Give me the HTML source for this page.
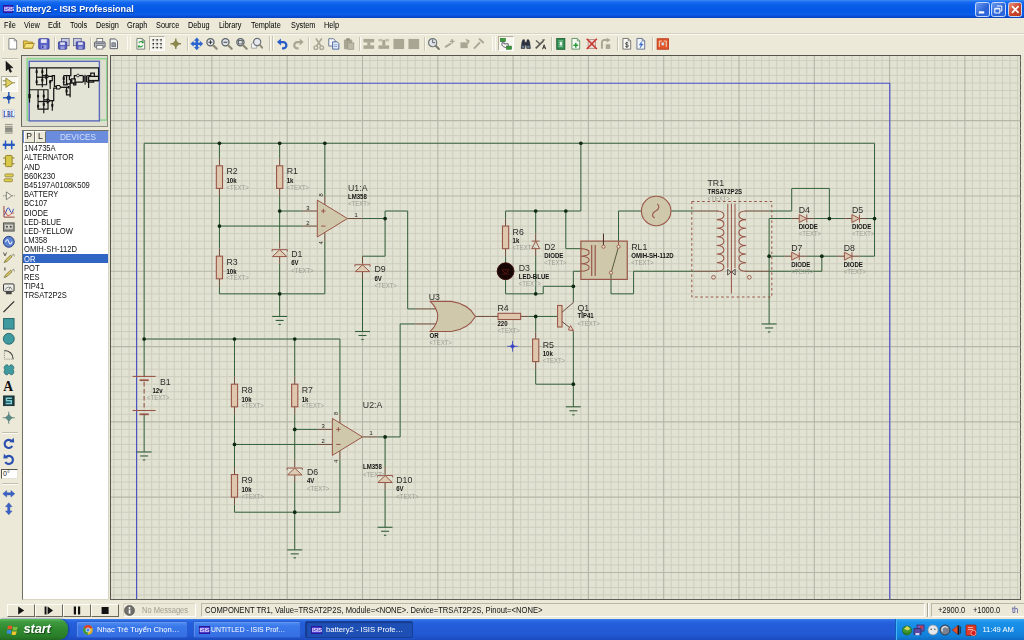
<!DOCTYPE html><html><head><meta charset="utf-8"><title>battery2 - ISIS Professional</title><style>
*{box-sizing:border-box;margin:0;padding:0}
html,body{width:1024px;height:640px;overflow:hidden;background:#ece9d8;font-family:"Liberation Sans",sans-serif;}
body{position:relative}
.abs{position:absolute}
#title{will-change:transform;left:0;top:0;width:1024px;height:18px;background:linear-gradient(#3f8cf4 0,#176af0 2px,#075ce8 6px,#0558e4 11px,#0a5eea 14.5px,#0848cc 17px,#0a40b8 18px);}
#title .t{left:16px;top:4.3px;color:#fff;font-weight:bold;font-size:9.1px;line-height:11px;transform-origin:0 50%;transform:scaleY(1.08);white-space:nowrap;text-shadow:0.6px 0.6px 0 #0a3a9a;letter-spacing:0px}
.wb{top:1.5px;width:14.6px;height:15px;border:1px solid #c4d8fa;border-radius:2.5px;background:linear-gradient(135deg,#6c9cf0,#2a62d6 60%,#2f6ae0);}
.wb.x{background:linear-gradient(135deg,#e8907a,#c8452a 55%,#b83a20);}
#menu{will-change:transform;left:0;top:18px;width:1024px;height:15px;background:#ece9d8;}
#menu span{position:absolute;top:2.4px;font-size:8.4px;line-height:10px;color:#000;white-space:nowrap;transform-origin:0 0;transform:scaleX(.875)}
#tb{left:0;top:33px;width:1024px;height:22px;background:#ece9d8;border-top:1px solid #d6d3c2;box-shadow:inset 0 1px 0 #f8f7f0}
.sep{position:absolute;top:36.5px;width:1px;height:14px;background:#c8c5b3;border-right:1px solid #fbfaf4;box-sizing:content-box}
#left{left:0;top:55px;width:20px;height:545px;background:#ece9d8}
#ov{left:21px;top:55.3px;width:86.6px;height:71.6px;background:#dfdfcf;border:1px solid #64645c;border-right-color:#8c8c82;border-bottom-color:#8c8c82}
#dev{will-change:transform;left:21.5px;top:130px;width:86.5px;height:469.5px;background:#fff;border:1px solid #6f6f64;border-right-color:#d8d5c4;border-bottom-color:#d8d5c4}
#devh{left:0;top:0;width:84.5px;height:11.5px;background:#6b8bdc}
.pl{position:absolute;top:0;height:11.5px;width:11px;background:#ece9d8;border:1px solid #fff;border-right-color:#6f6f64;border-bottom-color:#6f6f64;font-size:8.6px;line-height:9.5px;text-align:center;color:#222}
#devh .d{left:25px;top:0.5px;width:60px;text-align:center;color:#cfe0fb;font-size:8.6px;line-height:11px;transform:scaleX(.96)}
.li{position:absolute;left:0;width:84.5px;height:9.2px;font-size:8.9px;line-height:10.4px;color:#111;white-space:nowrap;padding-left:1.2px}
.li span{display:inline-block;transform-origin:0 50%;transform:scaleX(.855)}
.li.sel{background:#3165c3;color:#fff}
#canvas{left:110px;top:55px;width:911px;height:544.5px;background:#e2e2d2;border-left:1px solid #55554d;border-top:1px solid #55554d;border-right:1.3px solid #5e5e56;border-bottom:1.3px solid #5e5e56}
#status{will-change:transform;left:0;top:600px;width:1024px;height:19px;background:#ece9d8}
.pb{position:absolute;top:3.5px;height:13px;width:28px;border:1px solid #fdfdf8;border-right-color:#6b675a;border-bottom-color:#6b675a;background:#ece9d8}
.sunk{position:absolute;top:3px;height:14px;border:1px solid #bab7a6;border-right-color:#fff;border-bottom-color:#fff;background:#ece9d8}
#status .s{position:absolute;font-size:9.2px;line-height:10px;top:5.3px;white-space:nowrap;color:#111;transform-origin:0 0}
#task{will-change:transform;left:0;top:619px;width:1024px;height:21px;background:linear-gradient(#3a80f0 0,#2a67e2 2px,#245edb 5px,#2259d4 15px,#1c4bbf 21px)}
#start{left:0;top:0;width:68px;height:21px;background:linear-gradient(#5cb85c 0,#3f9a3f 3px,#2f8a2f 10px,#2a7f2a 17px,#226a22 21px);border-radius:0 9px 9px 0;box-shadow:1px 0 2px #1a3f8a}
#start .t{left:23.5px;top:2px;font-size:13px;line-height:15px;color:#fff;font-weight:bold;font-style:italic;text-shadow:1px 1px 1px #174a17;letter-spacing:-0.2px}
.tk{position:absolute;top:2px;height:17px;border-radius:2px;background:linear-gradient(#4f8df2,#3a78ea 30%,#356fe3);border:1px solid #2a5ccc;box-shadow:inset 0.5px 0.5px 0 #78a8f8;color:#fff;font-size:7.6px;line-height:15px;white-space:nowrap;overflow:hidden}
.tk.act{background:#1e4fb4;border-color:#173f94;box-shadow:inset 1px 1px 1px #143a8a}
.tk span{position:absolute;left:20px;top:0;transform-origin:0 50%;transform:scaleX(.94)}
.isis{position:absolute;left:6px;top:4px;width:11px;height:7.5px;background:#4a3cd2;border:0.5px solid #2a1a98;color:#ece4ff;font-size:5.8px;line-height:6.5px;text-align:center;font-weight:bold;letter-spacing:-0.3px}
#tray{left:895px;top:0;width:129px;height:21px;background:linear-gradient(#3aa8f4 0,#1b93ea 3px,#158ae4 10px,#1280da 17px,#0f6cc4 21px);border-left:1px solid #0d5fb8;box-shadow:inset 1px 0 0 #48b4f8}
#tray .tm{left:86.4px;top:4.6px;color:#fff;font-size:7.6px;line-height:11px;white-space:nowrap}
svg text{font-family:"Liberation Sans",sans-serif}
svg text.serif{font-family:"Liberation Serif",serif}
.ref{font-size:9.7px;fill:#2e2e2c}
.val{font-size:6.6px;fill:#141414;font-weight:bold}
.tx{font-size:6.4px;fill:#9b9b92}
.pn{font-size:5.8px;fill:#1c1c1c}
</style></head><body>
<div id="title" class="abs"><div class="isis" style="left:3px;top:5px;width:10px;height:7.5px">ISIS</div><div class="t abs">battery2 - ISIS Professional</div>
<div class="wb abs" style="left:975.2px"><svg width="12.6" height="13" style="position:absolute;left:0;top:0"><rect x="2.8" y="8.3" width="5.4" height="2.2" fill="#fff"/></svg></div>
<div class="wb abs" style="left:991.3px"><svg width="12.6" height="13" style="position:absolute;left:0;top:0"><path d="M4.8,3h5v5h-1.6M2.8,5.3h5v4.7h-5z M2.8,5.9h5" fill="none" stroke="#fff" stroke-width="1"/></svg></div>
<div class="wb x abs" style="left:1007.8px"><svg width="12.6" height="13" style="position:absolute;left:0;top:0"><path d="M3,3.2l6.6,6.6M9.6,3.2l-6.6,6.6" stroke="#fff" stroke-width="1.7"/></svg></div>
</div>
<div id="menu" class="abs">
<span style="left:4px">File</span>
<span style="left:24px">View</span>
<span style="left:48px">Edit</span>
<span style="left:69.5px">Tools</span>
<span style="left:96px">Design</span>
<span style="left:127px">Graph</span>
<span style="left:156px">Source</span>
<span style="left:188px">Debug</span>
<span style="left:219px">Library</span>
<span style="left:251px">Template</span>
<span style="left:291px">System</span>
<span style="left:324px">Help</span>
</div>
<div id="tb" class="abs"></div>
<div class="sep" style="left:53.5px"></div>
<div class="sep" style="left:89.5px"></div>
<div class="sep" style="left:186.5px"></div>
<div class="sep" style="left:308px"></div>
<div class="sep" style="left:358.5px"></div>
<div class="sep" style="left:424px"></div>
<div class="sep" style="left:551px"></div>
<div class="sep" style="left:616.5px"></div>
<div class="sep" style="left:652px"></div>
<div class="abs" style="left:2.5px;top:36px;width:1.6px;height:15px;background:#c6c3b0;border-right:1px solid #fbfaf4"></div>
<div class="abs" style="left:126.5px;top:36px;width:1.6px;height:15px;background:#c6c3b0;border-right:1px solid #fbfaf4"></div>
<div class="abs" style="left:129.5px;top:36px;width:1.6px;height:15px;background:#c6c3b0;border-right:1px solid #fbfaf4"></div>
<div class="abs" style="left:269px;top:36px;width:1.6px;height:15px;background:#c6c3b0;border-right:1px solid #fbfaf4"></div>
<div class="abs" style="left:272px;top:36px;width:1.6px;height:15px;background:#c6c3b0;border-right:1px solid #fbfaf4"></div>
<div class="abs" style="left:491.5px;top:36px;width:1.6px;height:15px;background:#c6c3b0;border-right:1px solid #fbfaf4"></div>
<div class="abs" style="left:494.5px;top:36px;width:1.6px;height:15px;background:#c6c3b0;border-right:1px solid #fbfaf4"></div>
<div class="abs" style="left:149.2px;top:35.6px;width:16px;height:15.6px;background:#f6f5ee;border:1px solid #b4b19e;border-right-color:#fff;border-bottom-color:#fff"></div>
<div class="abs" style="left:497.8px;top:35.6px;width:16px;height:15.6px;background:#f6f5ee;border:1px solid #b4b19e;border-right-color:#fff;border-bottom-color:#fff"></div>
<svg class="abs" style="left:5.5px;top:36.6px" width="13.6" height="13.6" viewBox="0 0 14 14"><path d="M3,1.5h5.5l2.5,2.5v8.5h-8z" fill="#fff" stroke="#7a7a78" stroke-width="0.9"/><path d="M8.5,1.5v2.5h2.5" fill="none" stroke="#7a7a78" stroke-width="0.8"/></svg>
<svg class="abs" style="left:21.5px;top:36.6px" width="13.6" height="13.6" viewBox="0 0 14 14"><path d="M1.5,4h4l1,1.2h4.5v6.3h-9.5z" fill="#e8c84a" stroke="#9a7a1a" stroke-width="0.8"/><path d="M1.5,11.5l2.2,-4.8h9l-2.2,4.8z" fill="#f6e27a" stroke="#9a7a1a" stroke-width="0.8"/></svg>
<svg class="abs" style="left:36.5px;top:36.6px" width="13.6" height="13.6" viewBox="0 0 14 14"><rect x="1.8" y="1.8" width="10.6" height="10.6" rx="0.8" fill="#5a62c8" stroke="#34389a" stroke-width="0.9"/><rect x="4" y="2.3" width="6" height="3.8" fill="#e8e8f4"/><rect x="4.2" y="8.2" width="5.6" height="4" fill="#9aa0e0"/><rect x="5" y="8.8" width="1.6" height="2.8" fill="#34389a"/></svg>
<svg class="abs" style="left:56.5px;top:36.6px" width="13.6" height="13.6" viewBox="0 0 14 14"><rect x="4.5" y="1.5" width="8" height="7.5" fill="#c8cce0" stroke="#5a5f8a" stroke-width="0.8"/><rect x="1.5" y="5" width="8.5" height="7.5" rx="0.6" fill="#5860c0" stroke="#30348a" stroke-width="0.8"/><rect x="3.3" y="5.5" width="4.8" height="2.6" fill="#e4e4f0"/><rect x="3.6" y="9.6" width="4.2" height="2.8" fill="#9aa0dc"/></svg>
<svg class="abs" style="left:72.0px;top:36.6px" width="13.6" height="13.6" viewBox="0 0 14 14"><rect x="1.5" y="1.5" width="8" height="7.5" fill="#c8cce0" stroke="#5a5f8a" stroke-width="0.8"/><rect x="4.5" y="5" width="8.5" height="7.5" rx="0.6" fill="#5860c0" stroke="#30348a" stroke-width="0.8"/><rect x="6.3" y="5.5" width="4.8" height="2.6" fill="#e4e4f0"/><rect x="6.6" y="9.6" width="4.2" height="2.8" fill="#9aa0dc"/></svg>
<svg class="abs" style="left:92.5px;top:36.6px" width="13.6" height="13.6" viewBox="0 0 14 14"><rect x="4" y="1.5" width="6" height="4" fill="#fff" stroke="#666" stroke-width="0.8"/><rect x="1.5" y="5" width="11" height="5.5" rx="1" fill="#b8bcc4" stroke="#55585f" stroke-width="0.9"/><rect x="3.8" y="8.6" width="6.4" height="3.8" fill="#fff" stroke="#666" stroke-width="0.8"/><rect x="2.5" y="6.2" width="9" height="1" fill="#7a7e88"/></svg>
<svg class="abs" style="left:107.0px;top:36.6px" width="13.6" height="13.6" viewBox="0 0 14 14"><path d="M3.2,2h5.4l2.2,2.2v7.8h-7.6z" fill="#f2f2f0" stroke="#5c616c" stroke-width="1"/><rect x="5" y="6" width="3.8" height="4" fill="#9a9ea8" stroke="#5c616c" stroke-width="0.7"/></svg>
<svg class="abs" style="left:133.5px;top:36.6px" width="13.6" height="13.6" viewBox="0 0 14 14"><path d="M3,1.5h5.5l2.5,2.5v8.5h-8z" fill="#f6f8f2" stroke="#6a7a6a" stroke-width="0.9"/><path d="M8.5,1.5v2.5h2.5" fill="none" stroke="#6a7a6a" stroke-width="0.8"/><path d="M5,6.2a2.4,2.4 0 0 1 4.2,-0.6M9.4,4.4v1.6h-1.6M9,8.6a2.4,2.4 0 0 1 -4.2,0.6M4.6,10.8v-1.6h1.6" fill="none" stroke="#2a9a3a" stroke-width="1.1"/></svg>
<svg class="abs" style="left:150.0px;top:36.6px" width="13.6" height="13.6" viewBox="0 0 14 14"><rect x="2.6" y="2.2" width="1.5" height="1.5" fill="#1a1a1a"/><rect x="2.6" y="6.2" width="1.5" height="1.5" fill="#1a1a1a"/><rect x="2.6" y="10.2" width="1.5" height="1.5" fill="#1a1a1a"/><rect x="6.6" y="2.2" width="1.5" height="1.5" fill="#1a1a1a"/><rect x="6.6" y="6.2" width="1.5" height="1.5" fill="#1a1a1a"/><rect x="6.6" y="10.2" width="1.5" height="1.5" fill="#1a1a1a"/><rect x="10.6" y="2.2" width="1.5" height="1.5" fill="#1a1a1a"/><rect x="10.6" y="6.2" width="1.5" height="1.5" fill="#1a1a1a"/><rect x="10.6" y="10.2" width="1.5" height="1.5" fill="#1a1a1a"/><rect x="4.9" y="2.5" width="0.8" height="0.8" fill="#7a7a7a"/><rect x="4.9" y="6.5" width="0.8" height="0.8" fill="#7a7a7a"/><rect x="4.9" y="10.5" width="0.8" height="0.8" fill="#7a7a7a"/><rect x="8.9" y="2.5" width="0.8" height="0.8" fill="#7a7a7a"/><rect x="8.9" y="6.5" width="0.8" height="0.8" fill="#7a7a7a"/><rect x="8.9" y="10.5" width="0.8" height="0.8" fill="#7a7a7a"/><rect x="2.9" y="4.5" width="0.8" height="0.8" fill="#7a7a7a"/><rect x="2.9" y="8.5" width="0.8" height="0.8" fill="#7a7a7a"/><rect x="6.9" y="4.5" width="0.8" height="0.8" fill="#7a7a7a"/><rect x="6.9" y="8.5" width="0.8" height="0.8" fill="#7a7a7a"/><rect x="10.9" y="4.5" width="0.8" height="0.8" fill="#7a7a7a"/><rect x="10.9" y="8.5" width="0.8" height="0.8" fill="#7a7a7a"/></svg>
<svg class="abs" style="left:169.0px;top:36.6px" width="13.6" height="13.6" viewBox="0 0 14 14"><path d="M7,1.6v10.8M1.6,7h10.8" stroke="#8c8850" stroke-width="1.5"/><path d="M7,3.4l3.6,3.6l-3.6,3.6l-3.6,-3.6z" fill="#8e8a4e" stroke="#76703a" stroke-width="0.5"/></svg>
<svg class="abs" style="left:189.5px;top:36.6px" width="13.6" height="13.6" viewBox="0 0 14 14"><path d="M5.7,3h2.6v2.7h2.7v2.6h-2.7v2.7h-2.6v-2.7h-2.7v-2.6h2.7z" fill="#2a66d2"/><path d="M7,0.7l2.5,2.8h-5zM7,13.3l2.5,-2.8h-5zM0.7,7l2.8,-2.5v5zM13.3,7l-2.8,-2.5v5z" fill="#2a66d2" stroke="#2458be" stroke-width="0.4"/></svg>
<svg class="abs" style="left:204.5px;top:36.6px" width="13.6" height="13.6" viewBox="0 0 14 14"><circle cx="5.6" cy="5.4" r="3.7" fill="#dfe5ea" stroke="#596068" stroke-width="1.3"/><path d="M8.4,8.4l3.6,3.8" stroke="#8c8a72" stroke-width="2.2" stroke-linecap="round"/><path d="M3.6,5.4h4M5.6,3.4v4" stroke="#333" stroke-width="1"/></svg>
<svg class="abs" style="left:219.5px;top:36.6px" width="13.6" height="13.6" viewBox="0 0 14 14"><circle cx="5.6" cy="5.4" r="3.7" fill="#dfe5ea" stroke="#596068" stroke-width="1.3"/><path d="M8.4,8.4l3.6,3.8" stroke="#8c8a72" stroke-width="2.2" stroke-linecap="round"/><path d="M3.6,5.4h4" stroke="#333" stroke-width="1"/></svg>
<svg class="abs" style="left:234.5px;top:36.6px" width="13.6" height="13.6" viewBox="0 0 14 14"><circle cx="5.6" cy="5.4" r="3.7" fill="#dfe5ea" stroke="#596068" stroke-width="1.3"/><path d="M8.4,8.4l3.6,3.8" stroke="#8c8a72" stroke-width="2.2" stroke-linecap="round"/><rect x="3.7" y="3.6" width="3.8" height="3.6" fill="none" stroke="#555" stroke-width="0.9"/></svg>
<svg class="abs" style="left:249.5px;top:36.6px" width="13.6" height="13.6" viewBox="0 0 14 14"><path d="M1.5,7l2.5,-2h3v6.5h-5.5z" fill="#f4f4f4" stroke="#888" stroke-width="0.7"/><circle cx="7.4" cy="5.2" r="3.7" fill="#e6eaee" stroke="#6a7078" stroke-width="1.2"/><path d="M10,8l2.6,3" stroke="#8c8a72" stroke-width="2" stroke-linecap="round"/></svg>
<svg class="abs" style="left:275.5px;top:36.6px" width="13.6" height="13.6" viewBox="0 0 14 14"><path d="M3.2,5.2h4.2a3.3,3.3 0 0 1 0,6.6h-1.2" fill="none" stroke="#2a5cc8" stroke-width="2.3"/><path d="M1,5.2l4,-3.6v7.2z" fill="#2a5cc8"/></svg>
<svg class="abs" style="left:291.0px;top:36.6px" width="13.6" height="13.6" viewBox="0 0 14 14"><path d="M10.8,5.2h-4.2a3.3,3.3 0 0 0 0,6.6h1.2" fill="none" stroke="#a9a693" stroke-width="2.3"/><path d="M13,5.2l-4,-3.6v7.2z" fill="#a9a693"/></svg>
<svg class="abs" style="left:311.5px;top:36.6px" width="13.6" height="13.6" viewBox="0 0 14 14"><path d="M4,1.5l5.4,8M10,1.5l-5.4,8" stroke="#a9a693" stroke-width="1.6"/><circle cx="4" cy="11" r="1.9" fill="none" stroke="#a9a693" stroke-width="1.4"/><circle cx="10" cy="11" r="1.9" fill="none" stroke="#a9a693" stroke-width="1.4"/></svg>
<svg class="abs" style="left:326.5px;top:36.6px" width="13.6" height="13.6" viewBox="0 0 14 14"><path d="M1.8,1.8h5l1.5,1.5v6h-6.5z" fill="#f4f6fa" stroke="#5a6a8a" stroke-width="0.9"/><path d="M5.8,5h4.7l1.7,1.7v5.8h-6.4z" fill="#e8eef8" stroke="#3a5a9a" stroke-width="0.9"/><path d="M7,8h3.8M7,9.8h3.8" stroke="#6a8ac8" stroke-width="0.7"/></svg>
<svg class="abs" style="left:341.5px;top:36.6px" width="13.6" height="13.6" viewBox="0 0 14 14"><rect x="2" y="2.5" width="8.5" height="10" rx="0.8" fill="#a9a693"/><rect x="4.5" y="1.3" width="3.5" height="2.4" fill="#8f8c7a"/><rect x="6" y="6" width="6.2" height="6.6" fill="#bdbaa8" stroke="#8f8c7a" stroke-width="0.6"/></svg>
<svg class="abs" style="left:362.0px;top:36.6px" width="13.6" height="13.6" viewBox="0 0 14 14"><rect x="1.5" y="2" width="11" height="3.6" fill="#a9a693"/><rect x="1.5" y="8.6" width="11" height="3.6" fill="#a9a693"/><rect x="5.4" y="5.4" width="3.2" height="3.4" fill="#a9a693"/></svg>
<svg class="abs" style="left:377.0px;top:36.6px" width="13.6" height="13.6" viewBox="0 0 14 14"><rect x="1.5" y="8.6" width="11" height="3.6" fill="#a9a693"/><rect x="5.4" y="3" width="3.2" height="5.8" fill="#a9a693"/><rect x="1.5" y="2" width="4" height="2.6" fill="#c2bfad"/><rect x="8.5" y="2" width="4" height="2.6" fill="#c2bfad"/></svg>
<svg class="abs" style="left:392.0px;top:36.6px" width="13.6" height="13.6" viewBox="0 0 14 14"><rect x="1.5" y="2" width="11" height="10.4" fill="#a9a693"/></svg>
<svg class="abs" style="left:406.5px;top:36.6px" width="13.6" height="13.6" viewBox="0 0 14 14"><rect x="1.5" y="2" width="11" height="10.4" fill="#a9a693"/></svg>
<svg class="abs" style="left:427.0px;top:36.6px" width="13.6" height="13.6" viewBox="0 0 14 14"><circle cx="5.8" cy="5.8" r="4.2" fill="#dfe4e6" stroke="#6f7678" stroke-width="1.2"/><path d="M5.8,2.6v3.2h2.6" stroke="#556" stroke-width="0.9" fill="none"/><path d="M9,9l3.2,3.4" stroke="#7a7a70" stroke-width="2" stroke-linecap="round"/></svg>
<svg class="abs" style="left:442.5px;top:36.6px" width="13.6" height="13.6" viewBox="0 0 14 14"><path d="M1.5,9.5l6,-3.5l1.2,1.5l-6,3.8z" fill="#a9a693"/><path d="M9.5,2v5M7,4.5h5" stroke="#a9a693" stroke-width="1.5"/></svg>
<svg class="abs" style="left:457.5px;top:36.6px" width="13.6" height="13.6" viewBox="0 0 14 14"><path d="M2.5,5.5h7.5v6h-7.5z" fill="#a9a693"/><path d="M8,2.5l3.5,1.2l-1,3.2" fill="#a9a693" stroke="#a9a693" stroke-width="1"/></svg>
<svg class="abs" style="left:472.0px;top:36.6px" width="13.6" height="13.6" viewBox="0 0 14 14"><path d="M2,12l6.2,-6.4" stroke="#a9a693" stroke-width="2"/><path d="M6.6,2.4l4.8,4.6l1.3,-1.5l-4.7,-4.5z" fill="#a9a693"/></svg>
<svg class="abs" style="left:498.5px;top:36.6px" width="13.6" height="13.6" viewBox="0 0 14 14"><rect x="1.5" y="1.5" width="5" height="3.2" fill="#3a9a3a" stroke="#1a6a1a" stroke-width="0.6"/><rect x="7.8" y="9.4" width="5" height="3.2" fill="#3a9a3a" stroke="#1a6a1a" stroke-width="0.6"/><path d="M5,4.7v2.3h4.5v2.4M4,4.7c-3,4 1,6 3.8,6.3" fill="none" stroke="#5a5a70" stroke-width="1"/></svg>
<svg class="abs" style="left:519.0px;top:36.6px" width="13.6" height="13.6" viewBox="0 0 14 14"><path d="M2.2,11.8l0.8,-6.5l1,-2.5h1.6l0.4,2.6h2l0.4,-2.6h1.6l1,2.5l0.8,6.5h-3.8l-0.4,-3.6h-1.2l-0.4,3.6z" fill="#2e3440" stroke="#1a1e28" stroke-width="0.5"/><rect x="3" y="9" width="2.6" height="2.2" fill="#6a7a90"/><rect x="8.4" y="9" width="2.6" height="2.2" fill="#6a7a90"/></svg>
<svg class="abs" style="left:534.0px;top:36.6px" width="13.6" height="13.6" viewBox="0 0 14 14"><path d="M1.8,11.6l7.6,-7.4" stroke="#5a5a52" stroke-width="1.8"/><path d="M8.4,2.2l3.2,0.4l-2.2,2.6z" fill="#5a5a52"/><path d="M2,3.5l4,3.4" stroke="#5a5a52" stroke-width="1.3"/><path d="M8.8,12.6l1.6,-4.6l1.7,4.6M9.4,11.1h2.2" stroke="#222" stroke-width="0.9" fill="none"/></svg>
<svg class="abs" style="left:554.0px;top:36.6px" width="13.6" height="13.6" viewBox="0 0 14 14"><rect x="2.8" y="1.5" width="8.4" height="11.2" fill="#2e8a4e" stroke="#1a5a30" stroke-width="0.8"/><path d="M4.5,4h5M4.5,6h5M4.5,8h5M4.5,10h5" stroke="#a8e0b8" stroke-width="0.8"/><rect x="6" y="5" width="2.2" height="3.8" fill="#e8f4ea"/></svg>
<svg class="abs" style="left:569.0px;top:36.6px" width="13.6" height="13.6" viewBox="0 0 14 14"><path d="M3,1.5h5.5l2.5,2.5v8.5h-8z" fill="#f4faf4" stroke="#5a8a5a" stroke-width="0.9"/><path d="M8.5,1.5v2.5h2.5" fill="none" stroke="#5a8a5a" stroke-width="0.8"/><path d="M7,6v5M4.5,8.5h5" stroke="#2a9a3a" stroke-width="1.5"/></svg>
<svg class="abs" style="left:584.5px;top:36.6px" width="13.6" height="13.6" viewBox="0 0 14 14"><rect x="3.2" y="2.5" width="7.6" height="9.4" fill="#e8d8d4" stroke="#a8786e" stroke-width="0.7"/><path d="M1.8,1.8l10.4,10.6M12.2,1.8l-10.4,10.6" stroke="#c8382e" stroke-width="1.7"/></svg>
<svg class="abs" style="left:599.0px;top:36.6px" width="13.6" height="13.6" viewBox="0 0 14 14"><path d="M3,12v-6.5a2.5,2.5 0 0 1 2.5,-2.5h3" fill="none" stroke="#a9a693" stroke-width="2"/><path d="M8,0.8l4,2.4l-4,2.4z" fill="#a9a693"/><rect x="7" y="7.5" width="4.6" height="4.8" fill="#a9a693"/></svg>
<svg class="abs" style="left:619.5px;top:36.6px" width="13.6" height="13.6" viewBox="0 0 14 14"><path d="M3,1.5h5.5l2.5,2.5v8.5h-8z" fill="#fbfbf6" stroke="#6a6a66" stroke-width="0.9"/><path d="M8.5,1.5v2.5h2.5" fill="none" stroke="#6a6a66" stroke-width="0.8"/><path d="M8.6,6.4c-0.4,-0.9 -3,-1 -3,0.4c0,1.6 3.2,0.8 3.2,2.4c0,1.4 -2.8,1.4 -3.4,0.2M7,4.8v6.6" fill="none" stroke="#444" stroke-width="0.9"/></svg>
<svg class="abs" style="left:634.0px;top:36.6px" width="13.6" height="13.6" viewBox="0 0 14 14"><path d="M3,1.5h5.5l2.5,2.5v8.5h-8z" fill="#f2f6fc" stroke="#5a6a86" stroke-width="0.9"/><path d="M8.5,1.5v2.5h2.5" fill="none" stroke="#5a6a86" stroke-width="0.8"/><path d="M8,4.6l-2.6,3.6h2l-1.2,3.2l3.2,-4.2h-2.1z" fill="#3a78d8" stroke="#2a58a8" stroke-width="0.4"/></svg>
<svg class="abs" style="left:655.5px;top:36.6px" width="13.6" height="13.6" viewBox="0 0 14 14"><rect x="1.2" y="1.8" width="11.6" height="10.8" fill="#e2562a" stroke="#b8381a" stroke-width="0.9"/><path d="M3.4,4.2v6M3.4,4.2h2.6M10.6,4.2v6M8,4.2h2.6M5.6,7.2h3" stroke="#f8d8c4" stroke-width="1"/><rect x="5.8" y="5.6" width="2.4" height="3" fill="#c8e0f0"/></svg>
<div id="left" class="abs"></div><div class="abs" style="left:1px;top:75.5px;width:16.5px;height:16px;background:#f7f6ef;border:1px solid #b4b19e;border-right-color:#fff;border-bottom-color:#fff"></div>
<svg class="abs" style="left:1.6px;top:60.0px" width="13.6" height="13.6" viewBox="0 0 14 14"><path d="M4,1.2l0.2,10l2.3,-2.2l1.8,3.8l1.7,-0.8l-1.8,-3.7l3.2,-0.3z" fill="#1c1c1c" stroke="#000" stroke-width="0.4"/></svg>
<svg class="abs" style="left:1.6px;top:76.4px" width="13.6" height="13.6" viewBox="0 0 14 14"><path d="M4,2.2l7,4.8l-7,4.8z" fill="#e0d060" stroke="#8a8030" stroke-width="0.9"/><path d="M0.8,5h3.2M0.8,9h3.2M11,7h2.6" stroke="#8a8030" stroke-width="1"/></svg>
<svg class="abs" style="left:1.6px;top:91.3px" width="13.6" height="13.6" viewBox="0 0 14 14"><path d="M7,1v12M1,7h12" stroke="#2a5fc0" stroke-width="1.5"/><circle cx="7" cy="7" r="2.4" fill="#1f4aa0"/></svg>
<svg class="abs" style="left:1.6px;top:106.6px" width="13.6" height="13.6" viewBox="0 0 14 14"><rect x="0.8" y="3" width="12.4" height="8" fill="#f4f6fc" stroke="#7088b8" stroke-width="0.6" stroke-dasharray="1,0.8"/><text x="1.3" y="10" font-size="7.4" font-weight="bold" fill="#1f3f9a" class="serif" textLength="11.4" lengthAdjust="spacingAndGlyphs">LBL</text></svg>
<svg class="abs" style="left:1.6px;top:122.2px" width="13.6" height="13.6" viewBox="0 0 14 14"><path d="M3,2.5h8M3,4.5h8M3,11.5h8" stroke="#8a8a80" stroke-width="0.9"/><rect x="3.2" y="6.2" width="7.6" height="3.4" fill="#8e8e86"/><path d="M3,6h8M3,10h8" stroke="#55554e" stroke-width="0.6"/></svg>
<svg class="abs" style="left:1.6px;top:138.0px" width="13.6" height="13.6" viewBox="0 0 14 14"><path d="M0.8,7h12.4" stroke="#2458c0" stroke-width="2.4"/><path d="M3.6,2.5v9M10,2.5v9" stroke="#2458c0" stroke-width="1.5"/></svg>
<svg class="abs" style="left:1.6px;top:154.0px" width="13.6" height="13.6" viewBox="0 0 14 14"><rect x="3.6" y="1.5" width="6.8" height="11.5" rx="1" fill="#d8c84a" stroke="#8a7a20" stroke-width="0.9"/><path d="M1.2,4.2h2.4M1.2,10h2.4M10.4,4.2h2.4M10.4,10h2.4" stroke="#8a7a20" stroke-width="1.1"/></svg>
<svg class="abs" style="left:1.6px;top:171.4px" width="13.6" height="13.6" viewBox="0 0 14 14"><rect x="3" y="3" width="8.6" height="3" rx="1" fill="#e0d050" stroke="#8a8030" stroke-width="0.8"/><rect x="2.2" y="8" width="8.6" height="3" rx="1" fill="#e0d050" stroke="#8a8030" stroke-width="0.8"/></svg>
<svg class="abs" style="left:1.6px;top:188.6px" width="13.6" height="13.6" viewBox="0 0 14 14"><path d="M4.5,3l5.6,4l-5.6,4z" fill="#f4f2e4" stroke="#77776c" stroke-width="0.9"/><path d="M1,7h3.5M10.1,7h3" stroke="#77776c" stroke-width="0.9" stroke-dasharray="1.2,0.8"/></svg>
<svg class="abs" style="left:1.6px;top:204.5px" width="13.6" height="13.6" viewBox="0 0 14 14"><path d="M2,1v11.5h11" fill="none" stroke="#8a2a2a" stroke-width="0.9"/><path d="M2,10c2,0 2.6,-7 4.4,-7s2,5 3.4,5s1.4,-4 2.6,-4" fill="none" stroke="#2a4ac0" stroke-width="1"/><path d="M2,6c2,0 2.4,5 4.4,5s2.6,-3 6,-3" fill="none" stroke="#c83a3a" stroke-width="0.9"/></svg>
<svg class="abs" style="left:1.6px;top:219.5px" width="13.6" height="13.6" viewBox="0 0 14 14"><rect x="1.5" y="3" width="11" height="8.4" fill="#9a9a94" stroke="#4a4a46" stroke-width="0.9"/><rect x="3" y="5" width="8" height="4" fill="#d8d8d0"/><circle cx="5" cy="7" r="1.1" fill="#444"/><circle cx="9" cy="7" r="1.1" fill="#444"/></svg>
<svg class="abs" style="left:1.6px;top:235.0px" width="13.6" height="13.6" viewBox="0 0 14 14"><circle cx="7" cy="7" r="5.6" fill="#5a80d0" stroke="#2a3f80" stroke-width="1"/><path d="M3.6,7.4c0.9,-3.4 2.5,-3.4 3.4,-0.4s2.5,3 3.4,-0.4" fill="none" stroke="#eef" stroke-width="1.1"/></svg>
<svg class="abs" style="left:1.6px;top:250.5px" width="13.6" height="13.6" viewBox="0 0 14 14"><path d="M2.2,12l1.6,-3l5,-4.6l1.5,1.6l-5,4.6z" fill="#d8c860" stroke="#6a6030" stroke-width="0.7"/><path d="M10,5c1.5,-2.5 2.5,-2 2.6,0.6" fill="none" stroke="#6a6a5a" stroke-width="0.8"/><path d="M1.5,1.5l1.6,3.5l1.6,-3.5" fill="none" stroke="#444" stroke-width="0.9"/></svg>
<svg class="abs" style="left:1.6px;top:266.0px" width="13.6" height="13.6" viewBox="0 0 14 14"><path d="M2.2,12l1.6,-3l5,-4.6l1.5,1.6l-5,4.6z" fill="#d8c860" stroke="#6a6030" stroke-width="0.7"/><path d="M10,5c1.5,-2.5 2.5,-2 2.6,0.6" fill="none" stroke="#6a6a5a" stroke-width="0.8"/><path d="M3,1.5v3.2" stroke="#444" stroke-width="1.1"/></svg>
<svg class="abs" style="left:1.6px;top:282.4px" width="13.6" height="13.6" viewBox="0 0 14 14"><rect x="1.6" y="2" width="10.8" height="7.6" rx="1" fill="#eeeeea" stroke="#333" stroke-width="1"/><path d="M3.5,8a3.6,3.6 0 0 1 7,0M7,8l1.8,-3" fill="none" stroke="#555" stroke-width="0.7"/><rect x="4" y="9.6" width="6" height="3" fill="#444"/></svg>
<svg class="abs" style="left:1.6px;top:300.0px" width="13.6" height="13.6" viewBox="0 0 14 14"><path d="M1.5,12.5l11,-11" stroke="#222" stroke-width="1.2"/></svg>
<svg class="abs" style="left:1.6px;top:316.7px" width="13.6" height="13.6" viewBox="0 0 14 14"><rect x="1.6" y="1.6" width="10.8" height="10.8" fill="#3f9aa0" stroke="#27686e" stroke-width="1"/></svg>
<svg class="abs" style="left:1.6px;top:331.7px" width="13.6" height="13.6" viewBox="0 0 14 14"><circle cx="7" cy="7" r="5.6" fill="#3f9aa0" stroke="#27686e" stroke-width="1"/></svg>
<svg class="abs" style="left:1.6px;top:348.4px" width="13.6" height="13.6" viewBox="0 0 14 14"><path d="M2.5,2.5a9,9 0 0 1 9,9" fill="none" stroke="#333" stroke-width="1.1"/><path d="M2.5,2.5v9h9" fill="none" stroke="#777" stroke-width="0.8" stroke-dasharray="1.2,1"/></svg>
<svg class="abs" style="left:1.6px;top:363.0px" width="13.6" height="13.6" viewBox="0 0 14 14"><path d="M4.4,2c2,-0.6 2,1.6 2.8,1.6s1,-2.2 2.8,-1.6c2.6,0.8 2.6,4 1.2,5c1.4,1 1.4,4.4 -1.2,5c-1.8,0.5 -2,-1.6 -2.8,-1.6s-0.8,2.2 -2.8,1.6c-2.6,-0.8 -2.6,-4 -1.2,-5c-1.4,-1 -1.4,-4.2 1.2,-5z" fill="#3f9aa0" stroke="#27686e" stroke-width="0.9"/></svg>
<svg class="abs" style="left:1.6px;top:379.2px" width="13.6" height="13.6" viewBox="0 0 14 14"><text x="1.2" y="12.3" font-size="14" font-weight="bold" fill="#111" class="serif">A</text></svg>
<svg class="abs" style="left:1.6px;top:394.4px" width="13.6" height="13.6" viewBox="0 0 14 14"><rect x="1.5" y="2" width="11" height="10" fill="#1f3f44" stroke="#10262a" stroke-width="0.8"/><path d="M10.2,4.4h-5.6v2.6h5v2.8h-5.8" fill="none" stroke="#7ad0d8" stroke-width="1.5"/></svg>
<svg class="abs" style="left:1.6px;top:410.5px" width="13.6" height="13.6" viewBox="0 0 14 14"><path d="M7,0.8v12.4M0.8,7h12.4" stroke="#6a8a84" stroke-width="1.1"/><path d="M7,3.6l3.4,3.4l-3.4,3.4l-3.4,-3.4z" fill="#5a8a88" stroke="#3a6a66" stroke-width="0.6"/></svg>
<svg class="abs" style="left:1.6px;top:437.0px" width="13.6" height="13.6" viewBox="0 0 14 14"><path d="M10.6,9.2a4.2,4.2 0 1 1 -0.6,-5" fill="none" stroke="#2a4fb0" stroke-width="2.2"/><path d="M7.6,5.4l5,0.2l-0.6,-4.8z" fill="#2a4fb0"/></svg>
<svg class="abs" style="left:1.6px;top:452.6px" width="13.6" height="13.6" viewBox="0 0 14 14"><path d="M3.4,9.2a4.2,4.2 0 1 0 0.6,-5" fill="none" stroke="#2a4fb0" stroke-width="2.2"/><path d="M6.4,5.4l-5,0.2l0.6,-4.8z" fill="#2a4fb0"/></svg>
<svg class="abs" style="left:1.6px;top:486.6px" width="13.6" height="13.6" viewBox="0 0 14 14"><path d="M0.8,7l4,-3.4v2.2h4.4v-2.2l4,3.4l-4,3.4v-2.2h-4.4v2.2z" fill="#3a62c8" stroke="#2a48a0" stroke-width="0.4"/></svg>
<svg class="abs" style="left:1.6px;top:502.4px" width="13.6" height="13.6" viewBox="0 0 14 14"><path d="M7,0.8l3.4,4h-2.2v4.4h2.2l-3.4,4l-3.4,-4h2.2v-4.4h-2.2z" fill="#3a62c8" stroke="#2a48a0" stroke-width="0.4"/></svg>
<div class="abs" style="left:1.5px;top:58.3px;width:16px;height:1px;background:#c2bfad;border-bottom:1px solid #fbfaf4;box-sizing:content-box"></div>
<div class="abs" style="left:1.5px;top:432.4px;width:16px;height:1px;background:#c2bfad;border-bottom:1px solid #fbfaf4;box-sizing:content-box"></div>
<div class="abs" style="left:1.5px;top:483.4px;width:16px;height:1px;background:#c2bfad;border-bottom:1px solid #fbfaf4;box-sizing:content-box"></div>
<div class="abs" style="left:1px;top:468.6px;width:16.5px;height:10.8px;background:#fff;border:1px solid #55554e;border-right-color:#e4e2d4;border-bottom-color:#e4e2d4;font-size:7px;line-height:8.5px;color:#222;padding-left:1px">0°</div>
<div id="ov" class="abs"><svg class="abs" style="left:0;top:0" width="84.6" height="69.6" viewBox="22 56.3 84.6 69.6">
<rect x="27.2" y="59" width="79.6" height="61.4" fill="none" stroke="#8fd693" stroke-width="1.6"/>
<rect x="29.2" y="61.6" width="70.2" height="59.6" fill="#e3e3d6" stroke="#5b69bc" stroke-width="1.4"/>
<polyline points="29.51,102.68 29.51,68.29 98.61,68.29 98.61,80.87 88.64,80.87" fill="none" stroke="#141414" stroke-width="1.25"/>
<polyline points="36.64,68.29 36.64,85.07 46.61,85.07 46.61,68.29" fill="none" stroke="#141414" stroke-width="1.15"/>
<polyline points="42.33,68.29 42.33,87.58" fill="none" stroke="#141414" stroke-width="1.15"/>
<polyline points="36.64,77.52 45.90,77.52" fill="none" stroke="#141414" stroke-width="1.25"/>
<polyline points="42.33,75.84 45.90,75.84" fill="none" stroke="#141414" stroke-width="1.25"/>
<polyline points="45.90,74.58 48.75,76.68 45.90,78.77 45.90,74.58" fill="none" stroke="#141414" stroke-width="1.15"/>
<polyline points="48.75,76.68 52.31,76.68 52.31,75.84 54.44,75.84 54.44,86.74 56.58,86.74" fill="none" stroke="#141414" stroke-width="1.25"/>
<polyline points="52.31,76.68 52.31,80.87 50.17,80.87 50.17,89.26" fill="none" stroke="#141414" stroke-width="1.15"/>
<polyline points="29.51,90.10 48.03,90.10 48.03,109.39 38.06,109.39 38.06,90.10" fill="none" stroke="#141414" stroke-width="1.15"/>
<polyline points="43.76,90.10 43.76,113.59" fill="none" stroke="#141414" stroke-width="1.15"/>
<polyline points="38.06,101.84 47.32,101.84" fill="none" stroke="#141414" stroke-width="1.25"/>
<polyline points="43.76,100.16 47.32,100.16" fill="none" stroke="#141414" stroke-width="1.25"/>
<polyline points="47.32,98.91 50.17,101.00 47.32,103.10 47.32,98.91" fill="none" stroke="#141414" stroke-width="1.15"/>
<polyline points="50.17,101.00 53.73,101.00 53.73,88.42 56.58,88.42" fill="none" stroke="#141414" stroke-width="1.25"/>
<polyline points="52.31,101.00 52.31,111.07" fill="none" stroke="#141414" stroke-width="1.15"/>
<polyline points="56.58,85.90 59.43,85.90 60.86,87.58 59.43,89.26 56.58,89.26 56.58,85.90" fill="none" stroke="#141414" stroke-width="1.05"/>
<polyline points="60.86,87.58 68.69,87.58" fill="none" stroke="#141414" stroke-width="1.3499999999999999"/>
<polyline points="66.55,87.58 66.55,95.13 70.12,95.13" fill="none" stroke="#141414" stroke-width="1.25"/>
<polyline points="70.12,82.55 70.12,97.65" fill="none" stroke="#141414" stroke-width="1.25"/>
<polyline points="68.69,86.32 68.69,88.84" fill="none" stroke="#141414" stroke-width="1.75"/>
<polyline points="63.70,75.84 63.70,85.07 67.27,85.07 67.27,84.23 70.12,84.23" fill="none" stroke="#141414" stroke-width="1.25"/>
<polyline points="66.55,75.84 66.55,85.07" fill="none" stroke="#141414" stroke-width="1.25"/>
<polyline points="63.70,75.84 70.83,75.84 70.83,68.29" fill="none" stroke="#141414" stroke-width="1.25"/>
<polyline points="69.40,75.84 69.40,80.03 70.83,80.03" fill="none" stroke="#141414" stroke-width="1.25"/>
<polyline points="70.83,79.19 75.10,79.19 75.10,83.39 70.83,83.39 70.83,79.19" fill="none" stroke="#141414" stroke-width="1.45"/>
<polyline points="71.54,80.03 71.54,82.55" fill="none" stroke="#141414" stroke-width="1.75"/>
<polyline points="74.39,79.19 74.39,75.84 76.53,75.84" fill="none" stroke="#141414" stroke-width="1.25"/>
<polyline points="73.68,83.39 73.68,85.07 75.81,85.07 75.81,82.55 82.94,82.55" fill="none" stroke="#141414" stroke-width="1.25"/>
<polyline points="79.38,75.84 82.94,75.84" fill="none" stroke="#141414" stroke-width="1.25"/>
<circle cx="77.95" cy="75.84" r="1.4" fill="none" stroke="#1a1a1a" stroke-width="0.8"/>
<circle cx="63.70" cy="82.55" r="1" fill="#1a1a1a"/>
<polyline points="83.65,75.84 83.65,82.55" fill="none" stroke="#141414" stroke-width="1.95"/>
<polyline points="86.50,75.84 86.50,82.55" fill="none" stroke="#141414" stroke-width="1.95"/>
<polyline points="85.07,75.00 85.07,85.07" fill="none" stroke="#141414" stroke-width="0.9500000000000001"/>
<polyline points="87.21,75.84 90.77,75.84 90.77,73.32 94.34,73.32 94.34,76.68" fill="none" stroke="#141414" stroke-width="1.25"/>
<polyline points="88.64,76.68 98.61,76.68" fill="none" stroke="#141414" stroke-width="1.3499999999999999"/>
<polyline points="88.64,76.68 88.64,88.42" fill="none" stroke="#141414" stroke-width="1.25"/>
<polyline points="87.21,82.55 93.62,82.55 93.62,80.87" fill="none" stroke="#141414" stroke-width="1.25"/>
<polyline points="88.64,80.87 98.61,80.87" fill="none" stroke="#141414" stroke-width="1.3499999999999999"/>
<polyline points="36.64,70.72 36.64,73.41" fill="none" stroke="#141414" stroke-width="2.05"/>
<polyline points="42.33,70.72 42.33,73.41" fill="none" stroke="#141414" stroke-width="2.05"/>
<polyline points="36.64,80.79 36.64,83.47" fill="none" stroke="#141414" stroke-width="2.05"/>
<polyline points="38.06,95.05 38.06,97.73" fill="none" stroke="#141414" stroke-width="2.05"/>
<polyline points="43.76,95.05 43.76,97.73" fill="none" stroke="#141414" stroke-width="2.05"/>
<polyline points="38.06,105.11 38.06,107.80" fill="none" stroke="#141414" stroke-width="2.05"/>
<polyline points="63.70,77.43 63.70,80.12" fill="none" stroke="#141414" stroke-width="2.05"/>
<polyline points="66.55,90.01 66.55,92.70" fill="none" stroke="#141414" stroke-width="2.05"/>
<polyline points="42.33,79.11 42.33,81.79" fill="none" stroke="#141414" stroke-width="2.05"/>
<polyline points="50.17,80.79 50.17,83.47" fill="none" stroke="#141414" stroke-width="2.05"/>
<polyline points="43.76,103.44 43.76,106.12" fill="none" stroke="#141414" stroke-width="2.05"/>
<polyline points="52.31,104.28 52.31,106.96" fill="none" stroke="#141414" stroke-width="2.05"/>
<polyline points="29.51,94.29 29.51,98.49" fill="none" stroke="#141414" stroke-width="2.35"/>
</svg></div>
<div id="dev" class="abs"><div id="devh" class="abs"><div class="pl" style="left:0.5px">P</div><div class="pl" style="left:12px">L</div><div class="d abs">DEVICES</div></div>
<div class="li" style="top:12.2px"><span>1N4735A</span></div>
<div class="li" style="top:21.4px"><span>ALTERNATOR</span></div>
<div class="li" style="top:30.6px"><span>AND</span></div>
<div class="li" style="top:39.8px"><span>B60K230</span></div>
<div class="li" style="top:49.0px"><span>B45197A0108K509</span></div>
<div class="li" style="top:58.2px"><span>BATTERY</span></div>
<div class="li" style="top:67.4px"><span>BC107</span></div>
<div class="li" style="top:76.6px"><span>DIODE</span></div>
<div class="li" style="top:85.8px"><span>LED-BLUE</span></div>
<div class="li" style="top:95.0px"><span>LED-YELLOW</span></div>
<div class="li" style="top:104.2px"><span>LM358</span></div>
<div class="li" style="top:113.4px"><span>OMIH-SH-112D</span></div>
<div class="li sel" style="top:122.6px"><span>OR</span></div>
<div class="li" style="top:131.8px"><span>POT</span></div>
<div class="li" style="top:141.0px"><span>RES</span></div>
<div class="li" style="top:150.2px"><span>TIP41</span></div>
<div class="li" style="top:159.4px"><span>TRSAT2P2S</span></div>
</div>
<div id="canvas" class="abs"></div>
<svg class="abs" style="left:0;top:0;will-change:transform" width="1024" height="640" viewBox="0 0 1024 640"><defs><clipPath id="cv"><rect x="111" y="56" width="909.5" height="543"/></clipPath></defs><g clip-path="url(#cv)">
<path d="M114.01,56V599M121.54,56V599M129.07,56V599M144.13,56V599M151.66,56V599M159.19,56V599M166.72,56V599M174.25,56V599M181.78,56V599M189.31,56V599M196.84,56V599M204.37,56V599M219.43,56V599M226.96,56V599M234.49,56V599M242.02,56V599M249.55,56V599M257.08,56V599M264.61,56V599M272.14,56V599M279.67,56V599M294.73,56V599M302.26,56V599M309.79,56V599M317.32,56V599M324.85,56V599M332.38,56V599M339.91,56V599M347.44,56V599M354.97,56V599M370.03,56V599M377.56,56V599M385.09,56V599M392.62,56V599M400.15,56V599M407.68,56V599M415.21,56V599M422.74,56V599M430.27,56V599M445.33,56V599M452.86,56V599M460.39,56V599M467.92,56V599M475.45,56V599M482.98,56V599M490.51,56V599M498.04,56V599M505.57,56V599M520.63,56V599M528.16,56V599M535.69,56V599M543.22,56V599M550.75,56V599M558.28,56V599M565.81,56V599M573.34,56V599M580.87,56V599M595.93,56V599M603.46,56V599M610.99,56V599M618.52,56V599M626.05,56V599M633.58,56V599M641.11,56V599M648.64,56V599M656.17,56V599M671.23,56V599M678.76,56V599M686.29,56V599M693.82,56V599M701.35,56V599M708.88,56V599M716.41,56V599M723.94,56V599M731.47,56V599M746.53,56V599M754.06,56V599M761.59,56V599M769.12,56V599M776.65,56V599M784.18,56V599M791.71,56V599M799.24,56V599M806.77,56V599M821.83,56V599M829.36,56V599M836.89,56V599M844.42,56V599M851.95,56V599M859.48,56V599M867.01,56V599M874.54,56V599M882.07,56V599M897.13,56V599M904.66,56V599M912.19,56V599M919.72,56V599M927.25,56V599M934.78,56V599M942.31,56V599M949.84,56V599M957.37,56V599M972.43,56V599M979.96,56V599M987.49,56V599M995.02,56V599M1002.55,56V599M1010.08,56V599M1017.61,56V599M111,60.41H1021M111,67.94H1021M111,75.47H1021M111,83.00H1021M111,90.53H1021M111,98.06H1021M111,105.59H1021M111,113.12H1021M111,128.18H1021M111,135.71H1021M111,143.24H1021M111,150.77H1021M111,158.30H1021M111,165.83H1021M111,173.36H1021M111,180.89H1021M111,188.42H1021M111,203.48H1021M111,211.01H1021M111,218.54H1021M111,226.07H1021M111,233.60H1021M111,241.13H1021M111,248.66H1021M111,256.19H1021M111,263.72H1021M111,278.78H1021M111,286.31H1021M111,293.84H1021M111,301.37H1021M111,308.90H1021M111,316.43H1021M111,323.96H1021M111,331.49H1021M111,339.02H1021M111,354.08H1021M111,361.61H1021M111,369.14H1021M111,376.67H1021M111,384.20H1021M111,391.73H1021M111,399.26H1021M111,406.79H1021M111,414.32H1021M111,429.38H1021M111,436.91H1021M111,444.44H1021M111,451.97H1021M111,459.50H1021M111,467.03H1021M111,474.56H1021M111,482.09H1021M111,489.62H1021M111,504.68H1021M111,512.21H1021M111,519.74H1021M111,527.27H1021M111,534.80H1021M111,542.33H1021M111,549.86H1021M111,557.39H1021M111,564.92H1021M111,579.98H1021M111,587.51H1021M111,595.04H1021" stroke="#cecebf" stroke-width="1" fill="none"/>
<path d="M136.60,56V599M211.90,56V599M287.20,56V599M362.50,56V599M437.80,56V599M513.10,56V599M588.40,56V599M663.70,56V599M739.00,56V599M814.30,56V599M889.60,56V599M964.90,56V599M111,120.65H1021M111,195.95H1021M111,271.25H1021M111,346.55H1021M111,421.85H1021M111,497.15H1021M111,572.45H1021" stroke="#b6b6a8" stroke-width="1.15" fill="none"/>
<path d="M136.6,600V83.2H889.8V600" fill="none" stroke="#4b50c6" stroke-width="1.15"/>
<polyline points="144.13,376.67 144.13,143.24 874.54,143.24 874.54,256.19 859.48,256.19" fill="none" stroke="#33603a" stroke-width="1.0"/>
<polyline points="219.43,143.24 219.43,158.3" fill="none" stroke="#33603a" stroke-width="1.0"/>
<polyline points="219.43,195.95 219.43,248.66" fill="none" stroke="#33603a" stroke-width="1.0"/>
<polyline points="219.43,286.31 219.43,293.84 324.85,293.84 324.85,241.13" fill="none" stroke="#33603a" stroke-width="1.0"/>
<polyline points="219.43,226.07 302.26,226.07" fill="none" stroke="#33603a" stroke-width="1.0"/>
<polyline points="279.67,143.24 279.67,158.3" fill="none" stroke="#33603a" stroke-width="1.0"/>
<polyline points="279.67,195.95 279.67,241.13" fill="none" stroke="#33603a" stroke-width="1.0"/>
<polyline points="279.67,263.72 279.67,316.43" fill="none" stroke="#33603a" stroke-width="1.0"/>
<polyline points="279.67,211.01 302.26,211.01" fill="none" stroke="#33603a" stroke-width="1.0"/>
<polyline points="324.85,143.24 324.85,195.95" fill="none" stroke="#33603a" stroke-width="1.0"/>
<polyline points="362.5,218.54 385.09,218.54 385.09,211.01 407.68,211.01 407.68,308.9 415.21,308.9" fill="none" stroke="#33603a" stroke-width="1.0"/>
<polyline points="385.09,218.54 385.09,256.19 362.5,256.19" fill="none" stroke="#33603a" stroke-width="1.0"/>
<polyline points="362.5,278.78 362.5,331.49" fill="none" stroke="#33603a" stroke-width="1.0"/>
<polyline points="144.13,339.02 339.91,339.02 339.91,414.32" fill="none" stroke="#33603a" stroke-width="1.0"/>
<polyline points="234.49,339.02 234.49,376.67" fill="none" stroke="#33603a" stroke-width="1.0"/>
<polyline points="234.49,414.32 234.49,467.03" fill="none" stroke="#33603a" stroke-width="1.0"/>
<polyline points="234.49,504.68 234.49,512.21 339.91,512.21 339.91,459.5" fill="none" stroke="#33603a" stroke-width="1.0"/>
<polyline points="234.49,444.44 317.32,444.44" fill="none" stroke="#33603a" stroke-width="1.0"/>
<polyline points="294.73,339.02 294.73,376.67" fill="none" stroke="#33603a" stroke-width="1.0"/>
<polyline points="294.73,414.32 294.73,459.5" fill="none" stroke="#33603a" stroke-width="1.0"/>
<polyline points="294.73,482.09 294.73,549.86" fill="none" stroke="#33603a" stroke-width="1.0"/>
<polyline points="294.73,429.38 317.32,429.38" fill="none" stroke="#33603a" stroke-width="1.0"/>
<polyline points="377.56,436.91 400.15,436.91 400.15,323.96 415.21,323.96" fill="none" stroke="#33603a" stroke-width="1.0"/>
<polyline points="385.09,436.91 385.09,467.03" fill="none" stroke="#33603a" stroke-width="1.0"/>
<polyline points="385.09,489.62 385.09,527.27" fill="none" stroke="#33603a" stroke-width="1.0"/>
<polyline points="144.13,414.32 144.13,451.97" fill="none" stroke="#33603a" stroke-width="1.0"/>
<polyline points="528.16,316.43 558.28,316.43" fill="none" stroke="#33603a" stroke-width="1.0"/>
<polyline points="535.69,316.43 535.69,331.49" fill="none" stroke="#33603a" stroke-width="1.0"/>
<polyline points="535.69,369.14 535.69,384.2 573.34,384.2" fill="none" stroke="#33603a" stroke-width="1.0"/>
<polyline points="573.34,331.49 573.34,406.79" fill="none" stroke="#33603a" stroke-width="1.0"/>
<polyline points="573.34,301.37 573.34,271.25 580.87,271.25" fill="none" stroke="#33603a" stroke-width="1.0"/>
<polyline points="573.34,286.31 543.22,286.31 543.22,293.84 505.57,293.84 505.57,279.53" fill="none" stroke="#33603a" stroke-width="1.0"/>
<polyline points="535.69,293.84 535.69,256.19" fill="none" stroke="#33603a" stroke-width="1.0"/>
<polyline points="535.69,233.6 535.69,211.01" fill="none" stroke="#33603a" stroke-width="1.0"/>
<polyline points="505.57,218.54 505.57,211.01 580.87,211.01 580.87,143.24" fill="none" stroke="#33603a" stroke-width="1.0"/>
<polyline points="505.57,256.19 505.57,262.97" fill="none" stroke="#33603a" stroke-width="1.0"/>
<polyline points="565.81,211.01 565.81,248.66 580.87,248.66" fill="none" stroke="#33603a" stroke-width="1.0"/>
<polyline points="618.52,241.13 618.52,211.01 641.11,211.01" fill="none" stroke="#33603a" stroke-width="1.0"/>
<polyline points="610.99,278.78 610.99,293.84 633.58,293.84 633.58,271.25 693.82,271.25" fill="none" stroke="#33603a" stroke-width="1.0"/>
<polyline points="671.23,211.01 693.82,211.01" fill="none" stroke="#33603a" stroke-width="1.0"/>
<polyline points="769.12,211.01 791.71,211.01 791.71,188.42 829.36,188.42 829.36,218.54" fill="none" stroke="#33603a" stroke-width="1.0"/>
<polyline points="769.12,271.25 821.83,271.25 821.83,256.19" fill="none" stroke="#33603a" stroke-width="1.0"/>
<polyline points="769.12,218.54 769.12,323.96" fill="none" stroke="#33603a" stroke-width="1.0"/>
<polyline points="769.12,218.54 791.71,218.54" fill="none" stroke="#33603a" stroke-width="1.0"/>
<polyline points="814.3,218.54 844.42,218.54" fill="none" stroke="#33603a" stroke-width="1.0"/>
<polyline points="867.01,218.54 874.54,218.54" fill="none" stroke="#33603a" stroke-width="1.0"/>
<polyline points="769.12,256.19 784.18,256.19" fill="none" stroke="#33603a" stroke-width="1.0"/>
<polyline points="806.77,256.19 836.89,256.19" fill="none" stroke="#33603a" stroke-width="1.0"/>
<polyline points="219.43,158.3 219.43,165.83" fill="none" stroke="#6e4c3a" stroke-width="1.0"/>
<polyline points="219.43,188.42 219.43,195.95" fill="none" stroke="#6e4c3a" stroke-width="1.0"/>
<rect x="216.33" y="165.83" width="6.2" height="22.59" fill="#dfc7ae" stroke="#985648" stroke-width="1.1"/>
<text transform="translate(226.4 174.3) scale(0.905 1)" class="ref">R2</text>
<text transform="translate(226.4 183.10000000000002) scale(0.92 1)" class="val">10k</text>
<text transform="translate(226.4 190.00000000000003) scale(0.94 1)" class="tx">&lt;TEXT&gt;</text>
<polyline points="279.67,158.3 279.67,165.83" fill="none" stroke="#6e4c3a" stroke-width="1.0"/>
<polyline points="279.67,188.42 279.67,195.95" fill="none" stroke="#6e4c3a" stroke-width="1.0"/>
<rect x="276.57" y="165.83" width="6.2" height="22.59" fill="#dfc7ae" stroke="#985648" stroke-width="1.1"/>
<text transform="translate(286.7 174.3) scale(0.905 1)" class="ref">R1</text>
<text transform="translate(286.7 183.10000000000002) scale(0.92 1)" class="val">1k</text>
<text transform="translate(286.7 190.00000000000003) scale(0.94 1)" class="tx">&lt;TEXT&gt;</text>
<polyline points="219.43,248.66 219.43,256.19" fill="none" stroke="#6e4c3a" stroke-width="1.0"/>
<polyline points="219.43,278.78 219.43,286.31" fill="none" stroke="#6e4c3a" stroke-width="1.0"/>
<rect x="216.33" y="256.19" width="6.2" height="22.59" fill="#dfc7ae" stroke="#985648" stroke-width="1.1"/>
<text transform="translate(226.4 264.7) scale(0.905 1)" class="ref">R3</text>
<text transform="translate(226.4 273.5) scale(0.92 1)" class="val">10k</text>
<text transform="translate(226.4 280.4) scale(0.94 1)" class="tx">&lt;TEXT&gt;</text>
<polyline points="234.49,376.67 234.49,384.2" fill="none" stroke="#6e4c3a" stroke-width="1.0"/>
<polyline points="234.49,406.79 234.49,414.32" fill="none" stroke="#6e4c3a" stroke-width="1.0"/>
<rect x="231.39000000000001" y="384.2" width="6.2" height="22.59" fill="#dfc7ae" stroke="#985648" stroke-width="1.1"/>
<text transform="translate(241.5 392.7) scale(0.905 1)" class="ref">R8</text>
<text transform="translate(241.5 401.5) scale(0.92 1)" class="val">10k</text>
<text transform="translate(241.5 408.4) scale(0.94 1)" class="tx">&lt;TEXT&gt;</text>
<polyline points="294.73,376.67 294.73,384.2" fill="none" stroke="#6e4c3a" stroke-width="1.0"/>
<polyline points="294.73,406.79 294.73,414.32" fill="none" stroke="#6e4c3a" stroke-width="1.0"/>
<rect x="291.63" y="384.2" width="6.2" height="22.59" fill="#dfc7ae" stroke="#985648" stroke-width="1.1"/>
<text transform="translate(301.7 392.7) scale(0.905 1)" class="ref">R7</text>
<text transform="translate(301.7 401.5) scale(0.92 1)" class="val">1k</text>
<text transform="translate(301.7 408.4) scale(0.94 1)" class="tx">&lt;TEXT&gt;</text>
<polyline points="234.49,467.03 234.49,474.56" fill="none" stroke="#6e4c3a" stroke-width="1.0"/>
<polyline points="234.49,497.15 234.49,504.68" fill="none" stroke="#6e4c3a" stroke-width="1.0"/>
<rect x="231.39000000000001" y="474.56" width="6.2" height="22.59" fill="#dfc7ae" stroke="#985648" stroke-width="1.1"/>
<text transform="translate(241.5 483.1) scale(0.905 1)" class="ref">R9</text>
<text transform="translate(241.5 491.90000000000003) scale(0.92 1)" class="val">10k</text>
<text transform="translate(241.5 498.8) scale(0.94 1)" class="tx">&lt;TEXT&gt;</text>
<polyline points="505.57,218.54 505.57,226.07" fill="none" stroke="#6e4c3a" stroke-width="1.0"/>
<polyline points="505.57,248.66 505.57,256.19" fill="none" stroke="#6e4c3a" stroke-width="1.0"/>
<rect x="502.46999999999997" y="226.07" width="6.2" height="22.59" fill="#dfc7ae" stroke="#985648" stroke-width="1.1"/>
<text transform="translate(512.6 234.6) scale(0.905 1)" class="ref">R6</text>
<text transform="translate(512.6 243.4) scale(0.92 1)" class="val">1k</text>
<text transform="translate(512.6 250.3) scale(0.94 1)" class="tx">&lt;TEXT&gt;</text>
<polyline points="535.69,331.49 535.69,339.02" fill="none" stroke="#6e4c3a" stroke-width="1.0"/>
<polyline points="535.69,361.61 535.69,369.14" fill="none" stroke="#6e4c3a" stroke-width="1.0"/>
<rect x="532.59" y="339.02" width="6.2" height="22.59" fill="#dfc7ae" stroke="#985648" stroke-width="1.1"/>
<text transform="translate(542.7 347.5) scale(0.905 1)" class="ref">R5</text>
<text transform="translate(542.7 356.3) scale(0.92 1)" class="val">10k</text>
<text transform="translate(542.7 363.2) scale(0.94 1)" class="tx">&lt;TEXT&gt;</text>
<polyline points="490.51,316.43 498.04,316.43" fill="none" stroke="#6e4c3a" stroke-width="1.0"/>
<polyline points="520.63,316.43 528.16,316.43" fill="none" stroke="#6e4c3a" stroke-width="1.0"/>
<rect x="498.04" y="313.33" width="22.59" height="6.2" fill="#dfc7ae" stroke="#985648" stroke-width="1.1"/>
<text transform="translate(497.5 311.2) scale(0.905 1)" class="ref">R4</text>
<text transform="translate(497.5 326.2) scale(0.92 1)" class="val">220</text>
<text transform="translate(497.5 333) scale(0.94 1)" class="tx">&lt;TEXT&gt;</text>
<polyline points="279.67,241.13 279.67,248.66" fill="none" stroke="#6e4c3a" stroke-width="1.0"/>
<polyline points="279.67,256.19 279.67,263.72" fill="none" stroke="#6e4c3a" stroke-width="1.0"/>
<polyline points="279.67,249.66 272.47,256.59 286.87,256.59 279.67,249.66" fill="#dccdb2" stroke="#985648" stroke-width="1.0"/>
<polyline points="272.07,251.46 272.07,249.66 287.27,249.66 287.27,251.46" fill="none" stroke="#985648" stroke-width="1.0"/>
<text transform="translate(291.2 256.7) scale(0.905 1)" class="ref">D1</text>
<text transform="translate(291.2 265.3) scale(0.92 1)" class="val">6V</text>
<text transform="translate(291.2 272.9) scale(0.94 1)" class="tx">&lt;TEXT&gt;</text>
<polyline points="362.5,256.19 362.5,263.72" fill="none" stroke="#6e4c3a" stroke-width="1.0"/>
<polyline points="362.5,271.25 362.5,278.78" fill="none" stroke="#6e4c3a" stroke-width="1.0"/>
<polyline points="362.50,264.72 355.30,271.65 369.70,271.65 362.50,264.72" fill="#dccdb2" stroke="#985648" stroke-width="1.0"/>
<polyline points="354.90,266.52 354.90,264.72 370.10,264.72 370.10,266.52" fill="none" stroke="#985648" stroke-width="1.0"/>
<text transform="translate(374.5 271.9) scale(0.905 1)" class="ref">D9</text>
<text transform="translate(374.5 280.5) scale(0.92 1)" class="val">6V</text>
<text transform="translate(374.5 288.09999999999997) scale(0.94 1)" class="tx">&lt;TEXT&gt;</text>
<polyline points="294.73,459.5 294.73,467.03" fill="none" stroke="#6e4c3a" stroke-width="1.0"/>
<polyline points="294.73,474.56 294.73,482.09" fill="none" stroke="#6e4c3a" stroke-width="1.0"/>
<polyline points="294.73,468.03 287.53,474.96 301.93,474.96 294.73,468.03" fill="#dccdb2" stroke="#985648" stroke-width="1.0"/>
<polyline points="287.13,469.83 287.13,468.03 302.33,468.03 302.33,469.83" fill="none" stroke="#985648" stroke-width="1.0"/>
<text transform="translate(307 474.5) scale(0.905 1)" class="ref">D6</text>
<text transform="translate(307 483.1) scale(0.92 1)" class="val">4V</text>
<text transform="translate(307 490.7) scale(0.94 1)" class="tx">&lt;TEXT&gt;</text>
<polyline points="385.09,467.03 385.09,474.56" fill="none" stroke="#6e4c3a" stroke-width="1.0"/>
<polyline points="385.09,482.09 385.09,489.62" fill="none" stroke="#6e4c3a" stroke-width="1.0"/>
<polyline points="385.09,475.56 377.89,482.49 392.29,482.49 385.09,475.56" fill="#dccdb2" stroke="#985648" stroke-width="1.0"/>
<polyline points="377.49,477.36 377.49,475.56 392.69,475.56 392.69,477.36" fill="none" stroke="#985648" stroke-width="1.0"/>
<text transform="translate(396.2 482.5) scale(0.905 1)" class="ref">D10</text>
<text transform="translate(396.2 491.1) scale(0.92 1)" class="val">6V</text>
<text transform="translate(396.2 498.7) scale(0.94 1)" class="tx">&lt;TEXT&gt;</text>
<polyline points="535.69,233.6 535.69,241.13" fill="none" stroke="#6e4c3a" stroke-width="1.0"/>
<polyline points="535.69,248.66 535.69,256.19" fill="none" stroke="#6e4c3a" stroke-width="1.0"/>
<polyline points="535.69,241.13 531.69,248.66 539.69,248.66 535.69,241.13" fill="none" stroke="#985648" stroke-width="1.0"/>
<polyline points="531.69,241.13 539.69,241.13" fill="none" stroke="#985648" stroke-width="1.0"/>
<text transform="translate(544.2 249.5) scale(0.905 1)" class="ref">D2</text>
<text transform="translate(544.2 257.5) scale(0.92 1)" class="val">DIODE</text>
<text transform="translate(544.2 265) scale(0.94 1)" class="tx">&lt;TEXT&gt;</text>
<polyline points="791.71,218.54 799.24,218.54" fill="none" stroke="#6e4c3a" stroke-width="1.0"/>
<polyline points="806.77,218.54 814.3,218.54" fill="none" stroke="#6e4c3a" stroke-width="1.0"/>
<polyline points="806.77,218.54 799.24,214.54 799.24,222.54 806.77,218.54" fill="#d9c4b0" stroke="#985648" stroke-width="1.0"/>
<polyline points="806.77,214.54 806.77,222.54" fill="none" stroke="#985648" stroke-width="1.0"/>
<text transform="translate(798.7 213) scale(0.905 1)" class="ref">D4</text>
<text transform="translate(798.7 229.2) scale(0.92 1)" class="val">DIODE</text>
<text transform="translate(798.7 236.2) scale(0.94 1)" class="tx">&lt;TEXT&gt;</text>
<polyline points="844.42,218.54 851.95,218.54" fill="none" stroke="#6e4c3a" stroke-width="1.0"/>
<polyline points="859.48,218.54 867.01,218.54" fill="none" stroke="#6e4c3a" stroke-width="1.0"/>
<polyline points="859.48,218.54 851.95,214.54 851.95,222.54 859.48,218.54" fill="#d9c4b0" stroke="#985648" stroke-width="1.0"/>
<polyline points="859.48,214.54 859.48,222.54" fill="none" stroke="#985648" stroke-width="1.0"/>
<text transform="translate(852 213) scale(0.905 1)" class="ref">D5</text>
<text transform="translate(852 229.2) scale(0.92 1)" class="val">DIODE</text>
<text transform="translate(852 236.2) scale(0.94 1)" class="tx">&lt;TEXT&gt;</text>
<polyline points="784.18,256.19 791.71,256.19" fill="none" stroke="#6e4c3a" stroke-width="1.0"/>
<polyline points="799.24,256.19 806.77,256.19" fill="none" stroke="#6e4c3a" stroke-width="1.0"/>
<polyline points="799.24,256.19 791.71,252.19 791.71,260.19 799.24,256.19" fill="#d9c4b0" stroke="#985648" stroke-width="1.0"/>
<polyline points="799.24,252.19 799.24,260.19" fill="none" stroke="#985648" stroke-width="1.0"/>
<text transform="translate(791.2 250.5) scale(0.905 1)" class="ref">D7</text>
<text transform="translate(791.2 267) scale(0.92 1)" class="val">DIODE</text>
<text transform="translate(791.2 273.7) scale(0.94 1)" class="tx">&lt;TEXT&gt;</text>
<polyline points="836.89,256.19 844.42,256.19" fill="none" stroke="#6e4c3a" stroke-width="1.0"/>
<polyline points="851.95,256.19 859.48,256.19" fill="none" stroke="#6e4c3a" stroke-width="1.0"/>
<polyline points="851.95,256.19 844.42,252.19 844.42,260.19 851.95,256.19" fill="#d9c4b0" stroke="#985648" stroke-width="1.0"/>
<polyline points="851.95,252.19 851.95,260.19" fill="none" stroke="#985648" stroke-width="1.0"/>
<text transform="translate(843.7 250.5) scale(0.905 1)" class="ref">D8</text>
<text transform="translate(843.7 267) scale(0.92 1)" class="val">DIODE</text>
<text transform="translate(843.7 273.7) scale(0.94 1)" class="tx">&lt;TEXT&gt;</text>
<polyline points="302.26,211.01 317.32,211.01" fill="none" stroke="#6e4c3a" stroke-width="1.0"/>
<polyline points="302.26,226.07 317.32,226.07" fill="none" stroke="#6e4c3a" stroke-width="1.0"/>
<polyline points="347.44,218.54 362.5,218.54" fill="none" stroke="#6e4c3a" stroke-width="1.0"/>
<polyline points="324.85,195.95 324.85,204.99" fill="none" stroke="#6e4c3a" stroke-width="1.0"/>
<polyline points="324.85,232.09 324.85,241.13" fill="none" stroke="#6e4c3a" stroke-width="1.0"/>
<polyline points="317.32,200.09 347.44,218.54 317.32,236.99 317.32,200.09" fill="#cfc8ab" stroke="#985648" stroke-width="1.0"/>
<path d="M321.12,211.01h4.4M323.32,208.81v4.4M321.12,226.07h4.4" stroke="#985648" stroke-width="1" fill="none"/>
<text transform="translate(306.3 209.5) scale(1.0 1)" class="pn">3</text>
<text transform="translate(306.3 224.6) scale(1.0 1)" class="pn">2</text>
<text transform="translate(354.4 216.7) scale(1.0 1)" class="pn">1</text>
<text transform="translate(323.3,196.6) rotate(-90)" class="pn">8</text>
<text transform="translate(322.8,244.5) rotate(-90)" class="pn">4</text>
<text transform="translate(348 190.7) scale(0.905 1)" class="ref">U1:A</text>
<text transform="translate(348 198.7) scale(0.92 1)" class="val">LM358</text>
<text transform="translate(348 206.0) scale(0.94 1)" class="tx">&lt;TEXT&gt;</text>
<polyline points="317.32,429.38 332.38,429.38" fill="none" stroke="#6e4c3a" stroke-width="1.0"/>
<polyline points="317.32,444.44 332.38,444.44" fill="none" stroke="#6e4c3a" stroke-width="1.0"/>
<polyline points="362.5,436.91 377.56,436.91" fill="none" stroke="#6e4c3a" stroke-width="1.0"/>
<polyline points="339.91,414.32 339.91,423.36" fill="none" stroke="#6e4c3a" stroke-width="1.0"/>
<polyline points="339.91,450.46 339.91,459.5" fill="none" stroke="#6e4c3a" stroke-width="1.0"/>
<polyline points="332.38,418.46 362.50,436.91 332.38,455.36 332.38,418.46" fill="#cfc8ab" stroke="#985648" stroke-width="1.0"/>
<path d="M336.18,429.38h4.4M338.38,427.18v4.4M336.18,444.44h4.4" stroke="#985648" stroke-width="1" fill="none"/>
<text transform="translate(321.4 427.9) scale(1.0 1)" class="pn">3</text>
<text transform="translate(321.4 442.9) scale(1.0 1)" class="pn">2</text>
<text transform="translate(369.5 435.1) scale(1.0 1)" class="pn">1</text>
<text transform="translate(338.4,415.0) rotate(-90)" class="pn">8</text>
<text transform="translate(337.9,462.9) rotate(-90)" class="pn">4</text>
<text transform="translate(362.8 408) scale(0.905 1)" class="ref">U2:A</text>
<text transform="translate(363 469.2) scale(0.92 1)" class="val">LM358</text>
<text transform="translate(363 476.5) scale(0.94 1)" class="tx">&lt;TEXT&gt;</text>
<line x1="272.17" y1="316.43" x2="287.17" y2="316.43" stroke="#33603a" stroke-width="1.1"/>
<line x1="275.67" y1="320.43" x2="283.67" y2="320.43" stroke="#33603a" stroke-width="1.1"/>
<line x1="278.47" y1="324.43" x2="280.87" y2="324.43" stroke="#33603a" stroke-width="1.1"/>
<line x1="355.0" y1="331.49" x2="370.0" y2="331.49" stroke="#33603a" stroke-width="1.1"/>
<line x1="358.5" y1="335.49" x2="366.5" y2="335.49" stroke="#33603a" stroke-width="1.1"/>
<line x1="361.3" y1="339.49" x2="363.7" y2="339.49" stroke="#33603a" stroke-width="1.1"/>
<line x1="287.23" y1="549.86" x2="302.23" y2="549.86" stroke="#33603a" stroke-width="1.1"/>
<line x1="290.73" y1="553.86" x2="298.73" y2="553.86" stroke="#33603a" stroke-width="1.1"/>
<line x1="293.53000000000003" y1="557.86" x2="295.93" y2="557.86" stroke="#33603a" stroke-width="1.1"/>
<line x1="377.59" y1="527.27" x2="392.59" y2="527.27" stroke="#33603a" stroke-width="1.1"/>
<line x1="381.09" y1="531.27" x2="389.09" y2="531.27" stroke="#33603a" stroke-width="1.1"/>
<line x1="383.89" y1="535.27" x2="386.28999999999996" y2="535.27" stroke="#33603a" stroke-width="1.1"/>
<line x1="136.63" y1="451.97" x2="151.63" y2="451.97" stroke="#33603a" stroke-width="1.1"/>
<line x1="140.13" y1="455.97" x2="148.13" y2="455.97" stroke="#33603a" stroke-width="1.1"/>
<line x1="142.93" y1="459.97" x2="145.32999999999998" y2="459.97" stroke="#33603a" stroke-width="1.1"/>
<line x1="565.84" y1="406.79" x2="580.84" y2="406.79" stroke="#33603a" stroke-width="1.1"/>
<line x1="569.34" y1="410.79" x2="577.34" y2="410.79" stroke="#33603a" stroke-width="1.1"/>
<line x1="572.14" y1="414.79" x2="574.5400000000001" y2="414.79" stroke="#33603a" stroke-width="1.1"/>
<line x1="761.62" y1="323.96" x2="776.62" y2="323.96" stroke="#33603a" stroke-width="1.1"/>
<line x1="765.12" y1="327.96" x2="773.12" y2="327.96" stroke="#33603a" stroke-width="1.1"/>
<line x1="767.92" y1="331.96" x2="770.32" y2="331.96" stroke="#33603a" stroke-width="1.1"/>
<line x1="132.63" y1="376.4" x2="155.63" y2="376.4" stroke="#985648" stroke-width="1.1"/>
<line x1="139.53" y1="380.2" x2="148.73" y2="380.2" stroke="#985648" stroke-width="1.8"/>
<line x1="132.63" y1="410.5" x2="155.63" y2="410.5" stroke="#985648" stroke-width="1.1"/>
<line x1="139.53" y1="414.3" x2="148.73" y2="414.3" stroke="#985648" stroke-width="1.8"/>
<line x1="144.13" y1="382" x2="144.13" y2="409" stroke="#985648" stroke-width="1.1" stroke-dasharray="4.5,2.5"/>
<line x1="144.13" y1="414.3" x2="144.13" y2="414.32" stroke="#985648" stroke-width="1.1"/>
<text transform="translate(160 384.5) scale(0.905 1)" class="ref">B1</text>
<text transform="translate(152.5 392.5) scale(0.92 1)" class="val">12v</text>
<text transform="translate(147 400) scale(0.94 1)" class="tx">&lt;TEXT&gt;</text>
<polyline points="415.21,308.9 436.29,308.9" fill="none" stroke="#6e4c3a" stroke-width="1.0"/>
<polyline points="415.21,323.96 436.29,323.96" fill="none" stroke="#6e4c3a" stroke-width="1.0"/>
<polyline points="475.45,316.43 490.51,316.43" fill="none" stroke="#6e4c3a" stroke-width="1.0"/>
<path d="M430.27,301.37 L451.27,301.37 Q468.45,303.87 475.45,316.43 Q468.45,328.99 451.27,331.49 L430.27,331.49 Q445.27,316.43 430.27,301.37 Z" fill="#cfc8ab" stroke="#985648" stroke-width="1.05"/>
<text transform="translate(428.7 299.5) scale(0.905 1)" class="ref">U3</text>
<text transform="translate(429.5 337.5) scale(0.92 1)" class="val">OR</text>
<text transform="translate(429.5 345) scale(0.94 1)" class="tx">&lt;TEXT&gt;</text>
<rect x="557.6" y="305.5" width="4.4" height="21.5" fill="#dfc7ae" stroke="#985648" stroke-width="1.1"/>
<polyline points="562.00,312.20 573.34,302.60 573.34,301.37" fill="none" stroke="#6a4a3e" stroke-width="1.0"/>
<polyline points="562.00,321.50 573.34,330.60 573.34,331.49" fill="none" stroke="#6a4a3e" stroke-width="1.0"/>
<polyline points="573.34,330.60 568.30,329.80 570.60,325.60 573.34,330.60" fill="#e8dcc8" stroke="#985648" stroke-width="1.0"/>
<text transform="translate(577.5 310.7) scale(0.905 1)" class="ref">Q1</text>
<text transform="translate(577.5 318) scale(0.92 1)" class="val">TIP41</text>
<text transform="translate(577.5 325.7) scale(0.94 1)" class="tx">&lt;TEXT&gt;</text>
<circle cx="505.57" cy="271.25" r="8.4" fill="#160606" stroke="#3a0d0d" stroke-width="1"/>
<path d="M502.07,269.75h7l-3.5,4z M502.07,274.05h7" stroke="#5a1512" stroke-width="0.9" fill="none"/>
<text transform="translate(518.7 271.2) scale(0.905 1)" class="ref">D3</text>
<text transform="translate(518.7 278.7) scale(0.92 1)" class="val">LED-BLUE</text>
<text transform="translate(518.7 286.2) scale(0.94 1)" class="tx">&lt;TEXT&gt;</text>
<rect x="580.87" y="241.13" width="46.38" height="38.25" fill="#cfc8ab" stroke="#985648" stroke-width="1.2"/>
<path d="M580.87,248.66 c11,0.5 11,7.03 0,7.53 c11,0.5 11,7.03 0,7.53 c11,0.5 11,7.03 0,7.53" fill="none" stroke="#985648" stroke-width="1.1"/>
<path d="M591.7,245v31M595.2,245v31" stroke="#985648" stroke-width="1.2" fill="none"/>
<polyline points="603.46,233.60 603.46,245.20" fill="none" stroke="#4a2a22" stroke-width="1.0"/>
<polyline points="618.52,241.13 618.52,245.20" fill="none" stroke="#985648" stroke-width="1.0"/>
<polyline points="610.99,274.30 610.99,278.78" fill="none" stroke="#4a5a3a" stroke-width="1.0"/>
<polyline points="611.59,271.30 618.12,248.20" fill="none" stroke="#5a5a40" stroke-width="1.0"/>
<circle cx="603.46" cy="246.7" r="1.6" fill="#e8e2cc" stroke="#985648" stroke-width="0.9"/>
<circle cx="618.52" cy="246.7" r="1.6" fill="#e8e2cc" stroke="#985648" stroke-width="0.9"/>
<circle cx="610.99" cy="272.7" r="1.6" fill="#e8e2cc" stroke="#985648" stroke-width="0.9"/>
<text transform="translate(631.2 249.5) scale(0.905 1)" class="ref">RL1</text>
<text transform="translate(631.2 258) scale(0.92 1)" class="val">OMIH-SH-112D</text>
<text transform="translate(631.2 265) scale(0.94 1)" class="tx">&lt;TEXT&gt;</text>
<circle cx="656.17" cy="211.01" r="14.76" fill="#cfc8ab" stroke="#985648" stroke-width="1.1"/>
<path d="M654.67,218.01 c-3,-1.5 -3,-5 1,-7 c4,-2 4,-5.5 1.5,-7" fill="none" stroke="#985648" stroke-width="1.1"/>
<rect x="691.8" y="201.5" width="80" height="95.5" fill="none" stroke="#985648" stroke-width="1" stroke-dasharray="2.6,2.6"/>
<polyline points="693.82,211.01 717.92,211.01" fill="none" stroke="#6e4c3a" stroke-width="1.0"/>
<polyline points="693.82,271.25 717.92,271.25" fill="none" stroke="#6e4c3a" stroke-width="1.0"/>
<polyline points="745.02,211.01 769.12,211.01" fill="none" stroke="#6e4c3a" stroke-width="1.0"/>
<polyline points="745.02,271.25 769.12,271.25" fill="none" stroke="#6e4c3a" stroke-width="1.0"/>
<path d="M716.8,211.01 c9.5,0.3 9.5,8.31 0,8.61 c9.5,0.3 9.5,8.31 0,8.61 c9.5,0.3 9.5,8.31 0,8.61 c9.5,0.3 9.5,8.31 0,8.61 c9.5,0.3 9.5,8.31 0,8.61 c9.5,0.3 9.5,8.31 0,8.61 c9.5,0.3 9.5,8.31 0,8.61" fill="none" stroke="#985648" stroke-width="1.05"/>
<path d="M746,211.01 c-9.5,0.3 -9.5,8.31 0,8.61 c-9.5,0.3 -9.5,8.31 0,8.61 c-9.5,0.3 -9.5,8.31 0,8.61 c-9.5,0.3 -9.5,8.31 0,8.61 c-9.5,0.3 -9.5,8.31 0,8.61 c-9.5,0.3 -9.5,8.31 0,8.61 c-9.5,0.3 -9.5,8.31 0,8.61" fill="none" stroke="#985648" stroke-width="1.05"/>
<path d="M727.8,203.7V268M735,203.7V268M731.4,203.7V293.5" stroke="#985648" stroke-width="1" fill="none"/>
<path d="M727.6,269.2l3.4,2.9l-3.4,2.9zM735.2,269.2l-3.4,2.9l3.4,2.9z" stroke="#3a2a2a" stroke-width="0.8" fill="none"/>
<circle cx="713.5" cy="277.3" r="1.9" fill="none" stroke="#985648" stroke-width="0.9"/>
<circle cx="749.3" cy="277.3" r="1.9" fill="none" stroke="#985648" stroke-width="0.9"/>
<text transform="translate(707.5 185.5) scale(0.905 1)" class="ref">TR1</text>
<text transform="translate(707.5 193.7) scale(0.92 1)" class="val">TRSAT2P2S</text>
<text transform="translate(707.5 200.7) scale(0.94 1)" class="tx">&lt;TEXT&gt;</text>
<circle cx="219.43" cy="143.24" r="1.85" fill="#0f2a14"/>
<circle cx="279.67" cy="143.24" r="1.85" fill="#0f2a14"/>
<circle cx="324.85" cy="143.24" r="1.85" fill="#0f2a14"/>
<circle cx="580.87" cy="143.24" r="1.85" fill="#0f2a14"/>
<circle cx="219.43" cy="226.07" r="1.85" fill="#0f2a14"/>
<circle cx="279.67" cy="211.01" r="1.85" fill="#0f2a14"/>
<circle cx="279.67" cy="293.84" r="1.85" fill="#0f2a14"/>
<circle cx="385.09" cy="218.54" r="1.85" fill="#0f2a14"/>
<circle cx="144.13" cy="339.02" r="1.85" fill="#0f2a14"/>
<circle cx="234.49" cy="339.02" r="1.85" fill="#0f2a14"/>
<circle cx="294.73" cy="339.02" r="1.85" fill="#0f2a14"/>
<circle cx="294.73" cy="429.38" r="1.85" fill="#0f2a14"/>
<circle cx="234.49" cy="444.44" r="1.85" fill="#0f2a14"/>
<circle cx="294.73" cy="512.21" r="1.85" fill="#0f2a14"/>
<circle cx="385.09" cy="436.91" r="1.85" fill="#0f2a14"/>
<circle cx="535.69" cy="316.43" r="1.85" fill="#0f2a14"/>
<circle cx="573.34" cy="384.2" r="1.85" fill="#0f2a14"/>
<circle cx="573.34" cy="286.31" r="1.85" fill="#0f2a14"/>
<circle cx="535.69" cy="293.84" r="1.85" fill="#0f2a14"/>
<circle cx="535.69" cy="211.01" r="1.85" fill="#0f2a14"/>
<circle cx="565.81" cy="211.01" r="1.85" fill="#0f2a14"/>
<circle cx="874.54" cy="218.54" r="1.85" fill="#0f2a14"/>
<circle cx="829.36" cy="218.54" r="1.85" fill="#0f2a14"/>
<circle cx="769.12" cy="256.19" r="1.85" fill="#0f2a14"/>
<circle cx="821.83" cy="256.19" r="1.85" fill="#0f2a14"/>
<path d="M512.5,341v10.6M507.2,346.3h10.6" stroke="#444cc4" stroke-width="0.9" fill="none"/><path d="M512.5,343.7l2.6,2.6l-2.6,2.6l-2.6,-2.6z" fill="#3f47c4"/>
</g></svg>
<div id="status" class="abs">
<div class="pb" style="left:7px"><svg width="26" height="11" style="position:absolute;left:0;top:0">
<path d="M10.2,1.4l6,4.1l-6,4.1z" fill="#111"/>
</svg></div>
<div class="pb" style="left:35px"><svg width="26" height="11" style="position:absolute;left:0;top:0">
<path d="M11.6,1.4l5.4,4.1l-5.4,4.1zM8.6,1.4h1.9v8.2h-1.9z" fill="#111"/>
</svg></div>
<div class="pb" style="left:63px"><svg width="26" height="11" style="position:absolute;left:0;top:0">
<path d="M9.8,1.6h2.2v7.8h-2.2zM14,1.6h2.2v7.8h-2.2z" fill="#111"/>
</svg></div>
<div class="pb" style="left:91px"><svg width="26" height="11" style="position:absolute;left:0;top:0">
<rect x="9.6" y="2" width="7" height="7" fill="#111"/>
</svg></div>
<div class="sunk" style="left:122.5px;width:73px;border-color:#d8d4c2 #fff #fff #d8d4c2"></div>
<svg class="abs" style="left:123.5px;top:4.5px" width="11" height="11"><circle cx="5.5" cy="5.5" r="5" fill="#6e6e6a" stroke="#4a4a48" stroke-width="0.6"/><rect x="4.7" y="4.6" width="1.7" height="4" fill="#fff"/><circle cx="5.5" cy="2.9" r="1" fill="#fff"/></svg>
<div class="s" style="left:141.5px;color:#a09d90;transform:scaleX(.82)">No Messages</div>
<div class="sunk" style="left:201px;width:724px"></div>
<div class="s" id="stxt" style="left:205px;transform:scaleX(.83)">COMPONENT TR1, Value=TRSAT2P2S, Module=&lt;NONE&gt;. Device=TRSAT2P2S, Pinout=&lt;NONE&gt;</div>
<div class="abs" style="left:927px;top:3px;width:1px;height:14px;background:#aca899;border-right:1px solid #fff;box-sizing:content-box"></div>
<div class="sunk" style="left:931px;width:93px;border-right:none"></div>
<div class="s" style="left:938px;transform:scaleX(.81)">+2900.0</div><div class="s" style="left:973px;transform:scaleX(.81)">+1000.0</div><div class="s" style="left:1012px;color:#3a3f9a;transform:scaleX(.81)">th</div>
</div>
<div id="task" class="abs"><div id="start" class="abs"><svg class="abs" style="left:7px;top:4.5px" width="12" height="12"><path d="M1,2.2q2.2,-1.2 4.4,0l-0.8,3.4q-2.2,-1.2 -4.4,0z" fill="#e8552a"/><path d="M6.3,2.6q2.2,1.2 4.4,0l-0.8,3.4q-2.2,1.2 -4.4,0z" fill="#7cc242"/><path d="M0,6.6q2.2,-1.2 4.4,0l-0.8,3.4q-2.2,-1.2 -4.4,0z" fill="#3a8be8"/><path d="M5.3,7q2.2,1.2 4.4,0l-0.8,3.4q-2.2,1.2 -4.4,0z" fill="#f4c430"/></svg><div class="t abs">start</div></div>
<div class="tk" style="left:75.5px;width:112px"><svg class="abs" style="left:6px;top:2.5px" width="10" height="10"><circle cx="5" cy="5" r="4.8" fill="#e0b020"/><path d="M5,5L0.8,2.6A4.8,4.8 0 0 1 9.2,2.6z" fill="#dc3a2a"/><path d="M5,5L0.8,2.6A4.8,4.8 0 0 0 5,9.8z" fill="#3a9a3a"/><circle cx="5" cy="5" r="2.1" fill="#4a8be8" stroke="#fff" stroke-width="0.7"/></svg><span style="transform:scaleX(1.012)">Nhạc Trẻ Tuyển Chọn…</span></div>
<div class="tk" style="left:192.5px;width:108px"><div class="isis" style="left:5px">ISIS</div><span style="left:17.5px;transform:scaleX(.905)">UNTITLED - ISIS Prof…</span></div>
<div class="tk act" style="left:305px;width:108px"><div class="isis" style="left:5px">ISIS</div><span style="left:19.5px;transform:scaleX(1.012)">battery2 - ISIS Profe…</span></div>
<div id="tray" class="abs"><svg class="abs" style="left:4.0px;top:3.5px" width="14" height="14" viewBox="0 0 14 14"><circle cx="7" cy="7.5" r="4.6" fill="#3f9a2e" stroke="#1f5a1a" stroke-width="0.6"/><path d="M4,6l3,-3l3.4,2.4l-2.4,2z" fill="#d8d860"/><path d="M3.4,9.5l3,1.5l3,-1.5" stroke="#1f5a1a" stroke-width="0.8" fill="none"/></svg>
<svg class="abs" style="left:15.8px;top:3.5px" width="14" height="14" viewBox="0 0 14 14"><rect x="5" y="2" width="7" height="6" fill="#7a5ab8" stroke="#3a2a6a" stroke-width="0.8"/><rect x="2" y="5.5" width="7" height="6" fill="#5a4aa8" stroke="#2a2a5a" stroke-width="0.8"/><rect x="3.4" y="10" width="4" height="2.2" fill="#d8d0f0"/><rect x="8.2" y="3" width="2.6" height="2.4" fill="#c83a3a"/></svg>
<svg class="abs" style="left:29.8px;top:3.5px" width="14" height="14" viewBox="0 0 14 14"><circle cx="7" cy="7" r="5" fill="#e4e8ec" stroke="#8a9098" stroke-width="0.7"/><circle cx="5.2" cy="6.2" r="0.8" fill="#555"/><circle cx="8.8" cy="6.2" r="0.8" fill="#555"/></svg>
<svg class="abs" style="left:42.0px;top:3.5px" width="14" height="14" viewBox="0 0 14 14"><circle cx="7" cy="7" r="5" fill="#7a8290" stroke="#2a2e38" stroke-width="0.8"/><path d="M4.5,8.5a3,3 0 1 1 5,-3.5" fill="none" stroke="#e8ecf0" stroke-width="1.2"/></svg>
<svg class="abs" style="left:54.4px;top:3.5px" width="14" height="14" viewBox="0 0 14 14"><path d="M2.2,7l5.6,-4.6v9.2z" fill="#e8502a" stroke="#7a1a10" stroke-width="0.5"/><path d="M8.6,2.4v9.2" stroke="#1a1a1a" stroke-width="1.6"/><path d="M10.6,3.4v7.2" stroke="#2a2a2a" stroke-width="0.8"/></svg>
<svg class="abs" style="left:68.2px;top:3.5px" width="14" height="14" viewBox="0 0 14 14"><rect x="2" y="2" width="10" height="10.5" rx="1" fill="#e03a2a" stroke="#8a1a10" stroke-width="0.7"/><circle cx="9.5" cy="10" r="2.6" fill="#d81a1a" stroke="#fff" stroke-width="0.5"/><path d="M4,4.5h5M4,6.5h5" stroke="#f8c8c0" stroke-width="0.8"/></svg><div class="tm abs">11:49 AM</div></div>
</div>
</body></html>
